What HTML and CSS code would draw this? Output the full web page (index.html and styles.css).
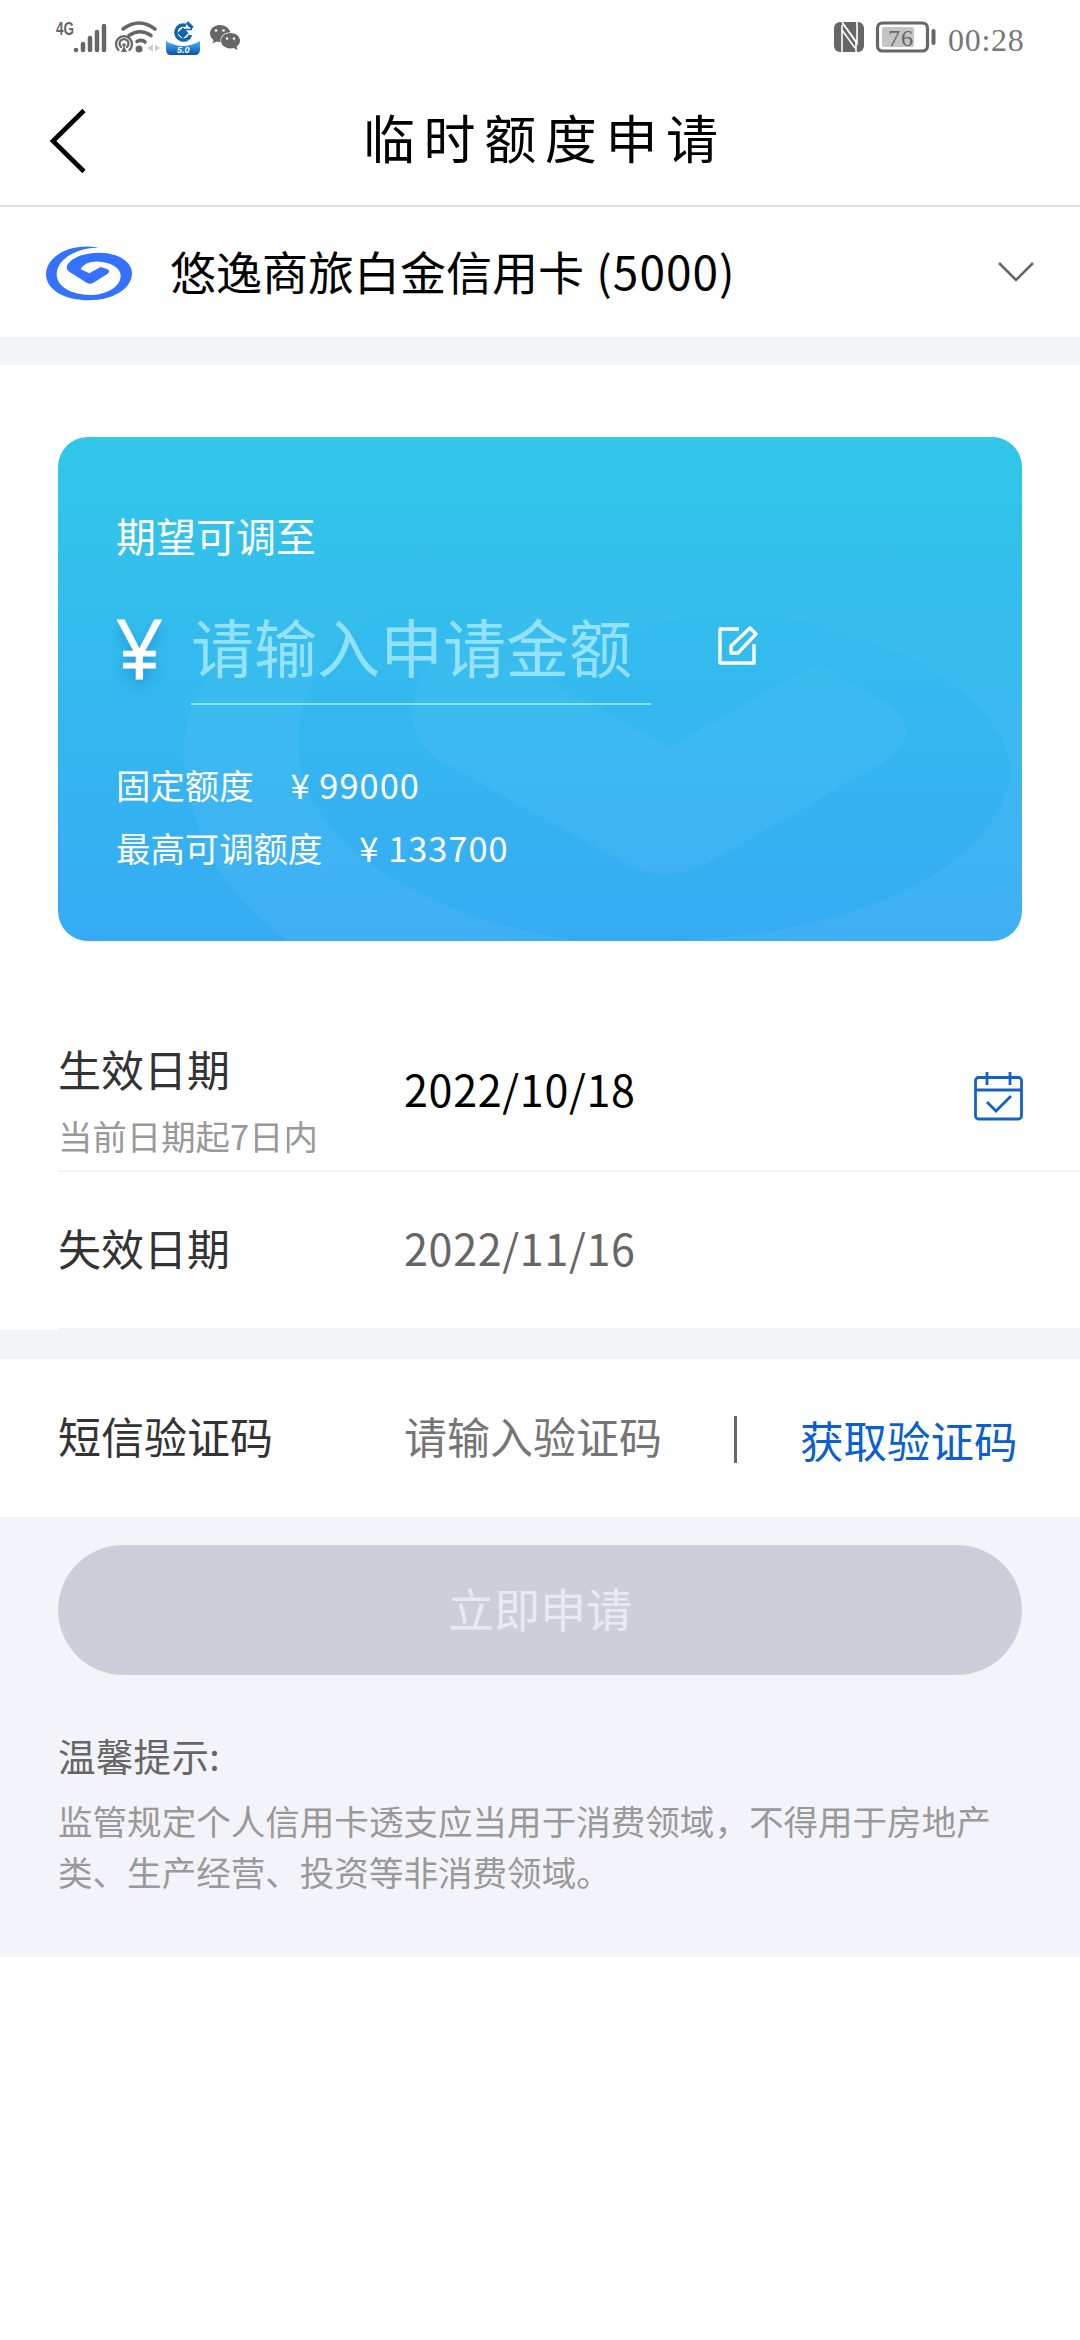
FILE: index.html
```html
<!DOCTYPE html>
<html lang="zh-CN">
<head>
<meta charset="utf-8">
<title>临时额度申请</title>
<link rel="stylesheet" href="styles.css">
</head>
<body>
<div class="status">
  <div class="status-left">
    <svg width="190" height="40" viewBox="0 0 190 40">
      <text class="net" x="0" y="17" textLength="18" lengthAdjust="spacingAndGlyphs">4G</text>
      <g stroke="#666" stroke-width="4.5" stroke-linecap="round">
        <path d="M20 32v0M27 32v-6M34 32v-12M41 32v-18M48 32v-24"/>
      </g>
      <g fill="none" stroke="#666" stroke-width="3.600" stroke-linecap="round">
        <path d="M67 11Q83-1 99 11M73 17.500Q84 10 95 17.500M81 23.500Q86 21 89 24"/>
        <path stroke-width="2.300" d="M62.500 32A8 8 0 1 1 73.500 32M65 29A4.500 4.500 0 1 1 71 29"/>
      </g>
      <circle cx="68" cy="27" r="1.800" fill="#666"/><path d="M68 28l-3 6h6z" fill="#666"/>
      <circle cx="83" cy="31" r="3.500" fill="#666"/>
      <path d="M97 26.500v7l-6-3.500zM99 26.500v7l5-3.500z" fill="#ccc"/>
      <defs><linearGradient id="app" x2="0" y2="1"><stop stop-color="#46b6f6"/><stop offset="1" stop-color="#0b4fb0"/></linearGradient></defs>
      <path d="M110 23q17 10 34 0v8q0 6-5 6h-24q-5 0-5-6z" fill="url(#app)"/>
      <path d="M130 7.500A7.500 7.500 0 1 0 134.500 17" fill="none" stroke="#1265b0" stroke-width="3.600"/>
      <path d="M127 11.500l9 0M127 10.500l4.500 4.500-4.500 4.500-4.500-4.500z" fill="#1265b0" stroke="#1265b0" stroke-width="1.500"/>
      <path d="M131 4.500l5.500 5.500" stroke="#1265b0" stroke-width="3.200"/>
      <text class="ver" x="121" y="35">5.0</text>
      <path d="M164 7c-6 0-10 4-10 8.500 0 3 1.500 5 3.500 6.500l-1 3.500 4-2 4 .7c-1-6 4-10 10-10C173 10 169 7 164 7z" fill="#666"/>
      <path d="M174.500 15c-5.500 0-9.500 3.600-9.500 7.800s4 7.700 9.500 7.700l3-.4 4 2-.8-3.500c2-1.500 3.300-3.500 3.300-5.800 0-4.200-4-7.800-9.500-7.800z" fill="#666"/>
      <g fill="#fff"><circle cx="160" cy="12.500" r="1.300"/><circle cx="167.500" cy="12.500" r="1.300"/><circle cx="171" cy="20.500" r="1.200"/><circle cx="178" cy="20.500" r="1.200"/></g>
    </svg>
  </div>
  <div class="status-right">
    <svg width="102" height="34" viewBox="0 0 102 34">
      <rect x="0" y="2" width="30" height="30" rx="6" fill="#666"/>
      <path d="M8 32V5.500L10 5l13 18V2" fill="none" stroke="#fff" stroke-width="1.600"/><path d="M8 2l14 20v10M8 10l13 18" fill="none" stroke="#fff" stroke-width="1.600"/>
      <rect x="43.500" y="3" width="50" height="28" rx="5" fill="#fff" stroke="#666" stroke-width="3.200"/>
      <rect x="48" y="7" width="32" height="20" rx="2" fill="#c4c4c4"/>
      <path d="M99.500 11v12" stroke="#666" stroke-width="4" stroke-linecap="round"/>
      <text class="level" x="54" y="26" textLength="25">76</text>
    </svg>
    <span class="clock">00:28</span>
  </div>
</div>
<header class="nav">
  <svg class="back" width="40" height="66" viewBox="0 0 40 66"><path d="M36 2.500L5 33l31 30.500" fill="none" stroke="#000" stroke-width="4.600"/></svg>
  <h1 class="title">临时额度申请</h1>
</header>
<div class="account">
  <svg class="logo" width="88" height="56" viewBox="18 27 264 168">
    <path d="M175 38C90 22 18 65 18 118c0 47 57 78 129 78 73 0 129-36 129-81 0-35-41-62-101-62-50 0-93 22-95 45q0 8 10 14l50 31q10 6 20 0l42-26q10-8 1-14l-21-7-34 19-26-12c8-16 28-25 56-23 37 2 64 20 64 42 0 33-42 58-92 58-55 0-100-25-100-62 0-43 55-80 125-80z" fill="#3471ff"/>
  </svg>
  <span class="account-name">悠逸商旅白金信用卡 <span class="digits">(5000)</span></span>
  <svg class="chevron" width="38" height="22" viewBox="0 0 38 22"><path d="M2 2l17 17L36 2" fill="none" stroke="#666" stroke-width="2.600"/></svg>
</div>
<div class="band"></div>
<main class="card-area">
  <section class="card">
    <svg class="mark" width="964" height="504" viewBox="0 0 964 504">
      <defs><linearGradient id="fade" gradientUnits="userSpaceOnUse" x1="0" y1="110" x2="0" y2="300"><stop stop-color="#fff" stop-opacity="0"/><stop offset="1" stop-color="#fff" stop-opacity=".045"/></linearGradient></defs>
      <path fill="url(#fade)" d="M964 172C850 100 650 95 500 150 380 190 320 260 375 320L570 428Q608 446 650 426L820 328Q875 296 820 262L760 226 612 310 490 245C560 170 700 160 800 200 920 240 964 310 950 350 920 450 760 502 600 504H964zM330 125C180 170 110 260 128 340 140 420 180 470 232 504H520C360 480 240 400 240 310 240 220 310 150 480 110z"/>
    </svg>
    <div class="card-label">期望可调至</div>
    <div class="amount">
      <span class="yen">¥</span>
      <div class="amount-input">请输入申请金额</div>
      <svg class="edit" width="42" height="42" viewBox="0 0 42 42" fill="none" stroke="#fff" stroke-width="3.400" stroke-linejoin="round"><path d="M22 5H3v34h34V20"/><path d="M14 22v7h7l18-19-6-6z"/></svg>
    </div>
    <div class="limit"><span>固定额度</span><span class="sum">¥ 99000</span></div>
    <div class="limit"><span>最高可调额度</span><span class="sum">¥ 133700</span></div>
  </section>
</main>
<section class="dates">
  <div class="row row-start">
    <div class="label">生效日期<small>当前日期起7日内</small></div>
    <div class="value">2022/10/18</div>
    <svg class="calendar" width="50" height="50" viewBox="0 0 50 50" fill="none" stroke="#1463c4" stroke-width="2.800"><rect x="1.500" y="6.500" width="46" height="41.500" rx="3"/><path d="M1.500 19h46M13 1v13M36 1v13M13 31l9 9 15-15"/></svg>
  </div>
  <div class="row row-end">
    <div class="label">失效日期</div>
    <div class="value muted">2022/11/16</div>
  </div>
</section>
<div class="band band-mid"></div>
<section class="sms">
  <div class="label">短信验证码</div>
  <div class="code">请输入验证码</div>
  <i class="divider"></i>
  <a class="get-code">获取验证码</a>
</section>
<footer class="foot">
  <div class="submit">立即申请</div>
  <div class="tip-title">温馨提示:</div>
  <p class="tip">监管规定个人信用卡透支应当用于消费领域，不得用于房地产类、生产经营、投资等非消费领域。</p>
</footer>
</body>
</html>
```

FILE: styles.css
```css
* { box-sizing: border-box; }
body { margin: 0; width: 1080px; height: 2340px; overflow: hidden; background: #fff; color: #000; font-family: "Noto Sans CJK SC", sans-serif; }
svg { display: block; flex: none; overflow: visible; }
.status { height: 76px; padding: 18px 56px 0 56px; display: flex; justify-content: space-between; }
.status-right { display: flex; gap: 12px; margin-top: 2px; }
.clock { font: 32px/40px "Liberation Serif", serif; color: #777; width: 76px; letter-spacing: .7px; white-space: nowrap; }
.net { font: bold 18px "Liberation Sans", sans-serif; fill: #666; }
.ver { font: italic bold 9px "Liberation Sans", sans-serif; fill: #fff; }
.level { font: 24px "Liberation Serif", serif; fill: #666; }
.nav { height: 131px; border-bottom: 2px solid #e2e2e2; display: flex; align-items: center; padding-left: 48px; }
.title { margin: -8px 0 0 275px; font-weight: 400; font-size: 52px; line-height: 80px; letter-spacing: 8.600px; }
.account { height: 130px; display: flex; align-items: center; padding: 0 45px 0 46px; }
.account-name { margin: -4px 0 0 36px; font-size: 46px; line-height: 68px; flex: 1; white-space: nowrap; }
.digits { letter-spacing: 1px; margin-left: 2px; }
.band { height: 28px; background: #f3f4f7; }
.card-area { padding: 72px 58px 0; }
.card { position: relative; height: 504px; border-radius: 30px; overflow: hidden; background: linear-gradient(#31c7e9, #36abf4); color: #fff; padding: 68px 58px 0; }
.mark { position: absolute; left: 0; top: 0; }
.card-label { font-size: 40px; line-height: 60px; }
.amount { display: flex; margin-top: 34px; height: 106px; align-items: flex-start; }
.yen { width: 75px; font: 400 82px/96px "Open Sans", sans-serif; -webkit-text-stroke: .8px #fff; text-shadow: 0 8px 12px rgba(20,100,190,.45); }
.amount-input { width: 460px; height: 106px; border-bottom: 2px solid #7fe3f8; font-size: 63px; line-height: 92px; color: #91e1fb; white-space: nowrap; }
.edit { margin: 25px 0 0 66px; }
.limit { display: flex; gap: 37px; font-size: 34.400px; line-height: 50px; margin-top: 54px; }
.sum { letter-spacing: 1px; }
.limit + .limit { margin-top: 13px; }
.row { display: flex; margin-left: 58px; border-bottom: 2px solid #f3f4f6; }
.row-start { height: 231px; padding-top: 95px; }
.row-end { height: 158px; padding-top: 43px; }
.label { width: 346px; font-size: 43px; line-height: 64px; color: #333; }
.label small { display: block; font-size: 34.400px; line-height: 50px; color: #999; margin-top: 10px; }
.value { font-size: 43px; line-height: 64px; letter-spacing: .7px; }
.row-start .value { margin-top: 20px; }
.muted { color: #666; }
.calendar { margin: 35px 56px 0 auto; }
.band-mid { height: 29px; }
.sms { height: 158px; padding: 44px 58px 0; display: flex; }
.code { width: 330px; font-size: 43px; line-height: 64px; color: #757575; }
.divider { width: 3px; height: 47px; background: #666; margin-top: 13px; }
.get-code { margin: 5px 0 0 63px; font-size: 43.500px; line-height: 64px; color: #0a60d0; white-space: nowrap; }
.foot { height: 440px; background: #f3f4f9; padding: 28px 58px 0; }
.submit { height: 130px; border-radius: 65px; background: #cccfda; color: #e8eaf3; font-size: 46px; line-height: 125px; text-align: center; }
.tip-title { margin-top: 52px; font-size: 37.500px; line-height: 56px; color: #666; letter-spacing: .3px; }
.tip { margin: 12px -20px 0 0; font-size: 34.560px; line-height: 51px; color: #999; }
```
